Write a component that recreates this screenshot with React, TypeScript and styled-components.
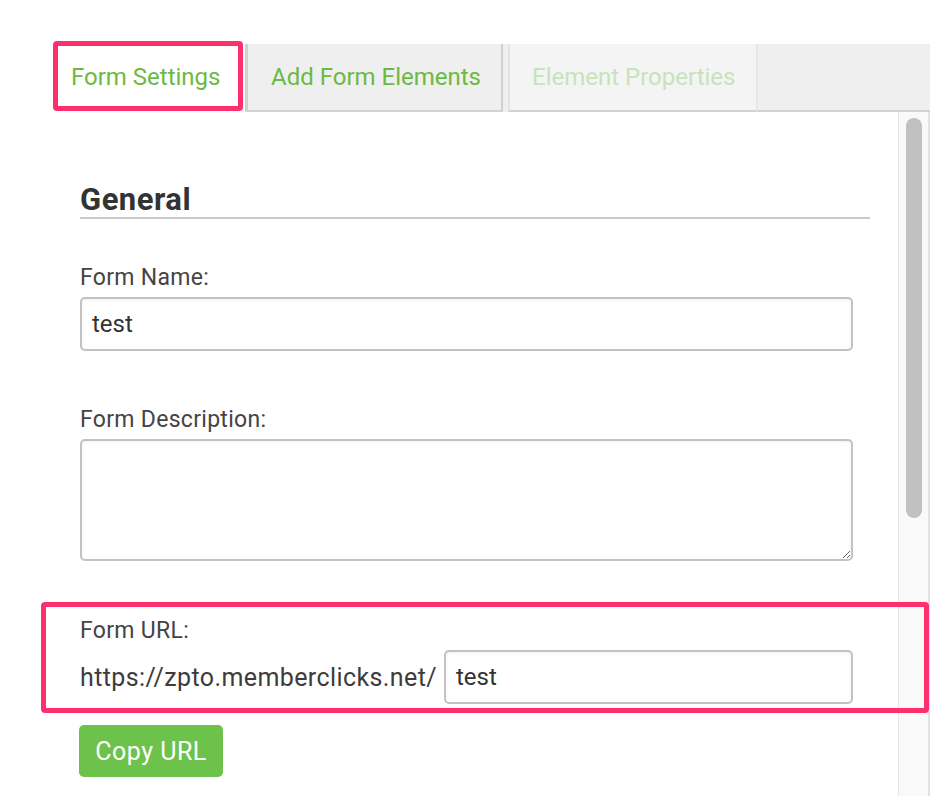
import React from "react";
import styled, { createGlobalStyle, css } from "styled-components";

const GlobalStyle = createGlobalStyle`
  html, body { margin: 0; padding: 0; background: #ffffff; }
  body {
    width: 930px;
    height: 796px;
    overflow: hidden;
    font-family: Roboto, "Liberation Sans", Arial, sans-serif;
  }
  *, *::before, *::after { box-sizing: border-box; }
`;

const Page = styled.div`
  width: 875px;
  margin-left: 55px;
  padding-top: 44px;
  display: flex;
  flex-direction: column;
`;

const TabBar = styled.div`
  display: flex;
  align-items: stretch;
  height: 68px;
  background: #efefef;
`;

const Annotation = css`
  &::after {
    content: "";
    position: absolute;
    border: 5px solid #fe2f6c;
    border-radius: 4px;
    pointer-events: none;
  }
`;

const Tab = styled.div<{ $variant: "active" | "normal" | "disabled"; $annotated?: boolean }>`
  position: relative;
  display: flex;
  align-items: center;
  font-size: 24px;
  white-space: nowrap;
  border-bottom: 2px solid #d2d2d2;
  ${(p) =>
    p.$variant === "active" &&
    css`
      background: #ffffff;
      color: #6cb944;
      width: 190px;
      padding: 0 0 0 16px;
      border-bottom-color: #ffffff;
    `}
  ${(p) =>
    p.$variant === "normal" &&
    css`
      background: #efefef;
      color: #6cb944;
      padding: 0 20px 0 23px;
      border-left: 3px solid #d0d0d0;
      border-right: 2px solid #d0d0d0;
    `}
  ${(p) =>
    p.$variant === "disabled" &&
    css`
      background: #f4f4f4;
      color: #c7e3bb;
      margin-left: 5px;
      padding: 0 21px 0 22px;
      border-left: 2px solid #e3e3e3;
      border-right: 2px solid #e6e6e6;
    `}
  ${(p) =>
    p.$annotated &&
    css`
      ${Annotation}
      &::after {
        left: -2px;
        top: -3px;
        width: 190px;
        height: 70px;
      }
    `}
`;

const TabFiller = styled.div`
  flex: 1;
  border-bottom: 2px solid #d2d2d2;
`;

const Panel = styled.div`
  display: flex;
  align-items: stretch;
  height: 700px;
`;

const Content = styled.div`
  flex: 1;
  padding: 0 28px 0 25px;
  display: flex;
  flex-direction: column;
  align-items: flex-start;
`;

const Heading = styled.h2`
  align-self: stretch;
  margin: 71px 0 0;
  font-size: 31px;
  line-height: 34px;
  letter-spacing: 0.5px;
  font-weight: 700;
  color: #333333;
  border-bottom: 2px solid #cacaca;
`;

const Field = styled.div<{ $gap: number }>`
  display: flex;
  flex-direction: column;
  margin-top: ${(p) => p.$gap}px;
`;

const Label = styled.label`
  font-size: 23px;
  line-height: 24px;
  letter-spacing: 0.3px;
  color: #444444;
  margin-bottom: 7px;
`;

const inputBase = css`
  border: 2px solid #c2c2c2;
  border-radius: 5px;
  background: #ffffff;
  box-shadow: inset 0 1px 3px rgba(0, 0, 0, 0.06);
  font-family: Roboto, "Liberation Sans", Arial, sans-serif;
  font-size: 24px;
  color: #333333;
  outline: none;
`;

const TextInput = styled.input<{ $width: number }>`
  ${inputBase}
  width: ${(p) => p.$width}px;
  height: 54px;
  padding: 0 10px;
`;

const TextArea = styled.textarea`
  ${inputBase}
  width: 773px;
  height: 122px;
  padding: 8px 10px;
  resize: both;
`;

const UrlSection = styled.div`
  position: relative;
  display: flex;
  flex-direction: column;
  margin-top: 58px;
  width: 773px;
  ${Annotation}
  &::after {
    left: -39px;
    right: -76px;
    top: -17px;
    bottom: -9px;
  }
`;

const UrlRow = styled.div`
  display: flex;
  align-items: center;
  gap: 7px;
`;

const UrlPrefix = styled.span`
  font-size: 25px;
  letter-spacing: 0.4px;
  color: #3c3c3c;
  white-space: nowrap;
  flex: 1;
`;

const CopyButton = styled.button`
  margin-top: 21px;
  margin-left: -1px;
  height: 52px;
  width: 144px;
  border: none;
  border-radius: 5px;
  background: #6cc24a;
  color: #ffffff;
  font-family: Roboto, "Liberation Sans", Arial, sans-serif;
  font-size: 25px;
  letter-spacing: 0.5px;
  padding: 0;
  cursor: pointer;
`;

const ScrollTrack = styled.div`
  width: 32px;
  border-left: 1px solid #e6e6e6;
  border-right: 2px solid #e2e2e2;
  background: #f9f9f9;
  padding: 6px 6px 0 7px;
`;

const ScrollThumb = styled.div`
  width: 16px;
  height: 400px;
  border-radius: 8px;
  background: #c1c1c1;
`;

export default function App() {
  return (
    <>
      <GlobalStyle />
      <Page>
        <TabBar>
          <Tab $variant="active" $annotated>
            Form Settings
          </Tab>
          <Tab $variant="normal">Add Form Elements</Tab>
          <Tab $variant="disabled">Element Properties</Tab>
          <TabFiller />
        </TabBar>
        <Panel>
          <Content>
            <Heading>General</Heading>
            <Field $gap={47}>
              <Label>Form Name:</Label>
              <TextInput $width={773} defaultValue="test" />
            </Field>
            <Field $gap={57}>
              <Label>Form Description:</Label>
              <TextArea />
            </Field>
            <UrlSection>
              <Label>Form URL:</Label>
              <UrlRow>
                <UrlPrefix>https://zpto.memberclicks.net/</UrlPrefix>
                <TextInput $width={409} defaultValue="test" />
              </UrlRow>
            </UrlSection>
            <CopyButton>Copy URL</CopyButton>
          </Content>
          <ScrollTrack>
            <ScrollThumb />
          </ScrollTrack>
        </Panel>
      </Page>
    </>
  );
}
